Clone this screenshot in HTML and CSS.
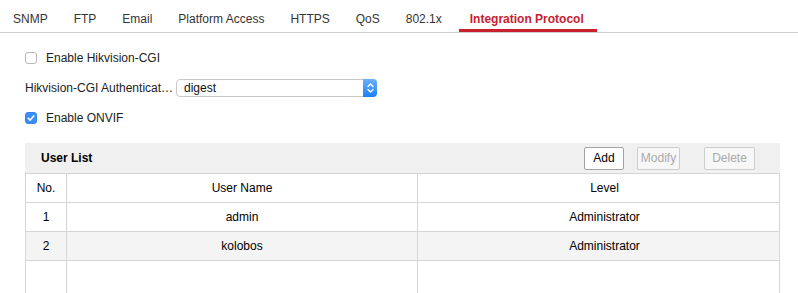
FILE: index.html
```html
<!DOCTYPE html>
<html lang="en">
<head>
  <meta charset="UTF-8">
  <title>Integration Protocol</title>
  <link rel="stylesheet" href="styles.css">
</head>
<body>

  <!-- TABS -->
  <nav class="tabs">
    <ul>
      <li>SNMP</li>
      <li>FTP</li>
      <li>Email</li>
      <li>Platform Access</li>
      <li>HTTPS</li>
      <li>QoS</li>
      <li>802.1x</li>
      <li class="active">Integration Protocol</li>
    </ul>
  </nav>

  <!-- CONTENT -->
  <section class="content">
    <label class="row">
      <span class="check"></span>
      <span>Enable Hikvision-CGI</span>
    </label>

    <div class="row">
      <span class="field-label" title="Hikvision-CGI Authentication">Hikvision-CGI Authenticat…</span>
      <div class="select">
        <span>digest</span>
        <span class="stepper">
          <svg width="7" height="10" viewBox="0 0 7 10">
            <path d="M1 3.5 L3.5 1 L6 3.5 M1 6.5 L3.5 9 L6 6.5" fill="none" stroke="#fff" stroke-width="1.3" stroke-linecap="round" stroke-linejoin="round"/>
          </svg>
        </span>
      </div>
    </div>

    <label class="row">
      <span class="check checked">
        <svg width="10" height="10" viewBox="0 0 10 10">
          <path d="M2.3 5.2 L4.2 7.1 L7.8 2.9" fill="none" stroke="#fff" stroke-width="1.6" stroke-linecap="round" stroke-linejoin="round"/>
        </svg>
      </span>
      <span>Enable ONVIF</span>
    </label>

    <!-- USER LIST -->
    <div class="user-list">
      <div class="list-head">
        <span class="list-title">User List</span>
        <div class="actions">
          <button class="btn btn-add">Add</button>
          <button class="btn btn-modify" disabled>Modify</button>
          <button class="btn btn-delete" disabled>Delete</button>
        </div>
      </div>
      <table>
        <colgroup>
          <col class="col-no">
          <col class="col-name">
          <col>
        </colgroup>
        <tr>
          <td>No.</td>
          <td>User Name</td>
          <td class="level">Level</td>
        </tr>
        <tr>
          <td>1</td>
          <td>admin</td>
          <td class="level">Administrator</td>
        </tr>
        <tr class="alt">
          <td>2</td>
          <td>kolobos</td>
          <td class="level">Administrator</td>
        </tr>
        <tr class="empty">
          <td></td>
          <td></td>
          <td></td>
        </tr>
      </table>
    </div>
  </section>

</body>
</html>
```

FILE: styles.css
```css
* {box-sizing:border-box;}
html, body {margin:0; padding:0; overflow:hidden;}
body {
  font-family:'Liberation Sans', Arial, sans-serif;
  font-size:12px; color:#222; background:#fff;
}

/* tabs */
.tabs ul {
  display:flex; list-style:none; margin:0; padding:0;
  border-bottom:1px solid #cfcfcf;
}
.tabs li {
  padding:12px 13px 3px; line-height:14px; color:#333;
  border-bottom:3px solid transparent; white-space:nowrap;
}
.tabs li.active {
  color:#c8202f; font-weight:bold; border-bottom-color:#c8202f;
  margin-left:4px; padding:12px 13px 3px 11px;
}

/* form rows */
.content {padding:10px 18px 0 25px;}
.row {display:flex; align-items:center; height:30px;}
.check {
  width:12px; height:12px; margin-right:9px;
  border:1px solid #b8b8b8; border-radius:3px; background:#fff;
  display:flex; align-items:center; justify-content:center;
}
.check.checked {background:#3a8ef5; border-color:#3584ec;}
.check svg {display:block;}

.field-label {
  width:150px; margin-right:1px; white-space:nowrap;
}
.select {
  width:201px; height:18px; display:flex; align-items:center;
  justify-content:space-between;
  border:1px solid #c8c8c8; border-radius:4px; background:#fff;
  padding-left:7px; color:#111;
}
.stepper {
  width:14px; height:18px; margin:-1px -1px -1px 0;
  border-radius:0 4px 4px 0;
  background:linear-gradient(#6bb2fb,#1b7ff7);
  display:flex; align-items:center; justify-content:center;
}
.stepper svg {display:block;}

/* user list */
.user-list {margin-top:10px;}
.list-head {
  height:30px; background:#f0f0f0;
  display:flex; align-items:center; justify-content:space-between;
  padding:0 25px 0 16px;
}
.list-title {font-weight:bold; color:#000;}
.actions {display:flex; align-items:center;}
.btn {
  height:23px; padding:0; font-family:inherit; font-size:12px;
  border:1px solid #a3a3a3; border-radius:2px; background:#fff; color:#000;
}
.btn:disabled {border-color:#cdcdcd; color:#a9a9a9; background:#f7f7f7;}
.btn-add {width:40px;}
.btn-modify {width:43px; margin-left:13px;}
.btn-delete {width:51px; margin-left:24px;}

table {
  width:755px; border-collapse:collapse; table-layout:fixed;
  color:#000;
}
.col-no {width:41px;}
.col-name {width:351px;}
td {
  border:1px solid #d5d5d5; height:29px; padding:0;
  text-align:center; vertical-align:middle;
}
td.level {padding-left:12px;}
tr.alt td {background:#f4f4f4;}
tr.empty td {height:40px;}
```
